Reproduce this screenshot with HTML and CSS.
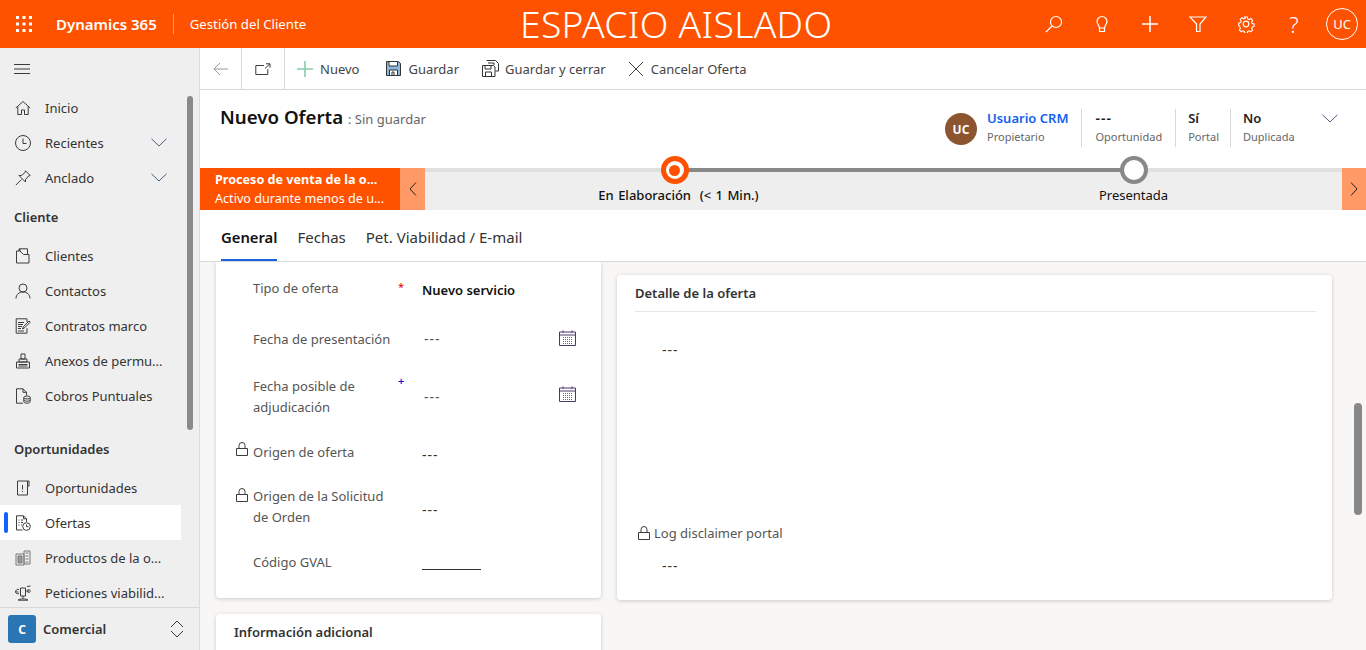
FILE: index.html
```html
<!DOCTYPE html>
<html lang="es">
<head>
	<meta charset="UTF-8" />
	<title>Nuevo Oferta</title>
	<link rel="stylesheet" href="styles.css">
</head>
<body>
<header class="topbar">
	<div class="brand">
		<svg class="waffle" width="16" height="16" viewBox="0 0 16 16" fill="#fff"><rect x="0" y="0" width="3" height="3"/><rect x="6.5" y="0" width="3" height="3"/><rect x="13" y="0" width="3" height="3"/><rect x="0" y="6.5" width="3" height="3"/><rect x="6.5" y="6.5" width="3" height="3"/><rect x="13" y="6.5" width="3" height="3"/><rect x="0" y="13" width="3" height="3"/><rect x="6.5" y="13" width="3" height="3"/><rect x="13" y="13" width="3" height="3"/></svg>
		<span class="product">Dynamics 365</span>
		<span class="app">Gestión del Cliente</span>
	</div>
	<div class="sandbox">ESPACIO AISLADO</div>
	<div class="top-actions">
		<button class="top-btn"><svg width="18" height="18" viewBox="0 0 18 18" class="ic-w"><circle cx="11" cy="7" r="5.5"/><path d="M7 11 1 17"/></svg></button>
		<button class="top-btn"><svg width="18" height="18" viewBox="0 0 18 18" class="ic-w"><path d="M6.5 13c0-2.500-2.500-3.500-2.500-6.500a5 5 0 0 1 10 0c0 3-2.500 4-2.500 6.500zM6.500 13v3.500h5V13"/></svg></button>
		<button class="top-btn"><svg width="18" height="18" viewBox="0 0 18 18" class="ic-w ic-thick"><path d="M9 1v16M1 9h16"/></svg></button>
		<button class="top-btn"><svg width="18" height="18" viewBox="0 0 18 18" class="ic-w"><path d="M1 2h16l-6 7v7.500H7.500V9z"/></svg></button>
		<button class="top-btn"><svg width="18" height="18" viewBox="0 0 18 18" class="ic-w"><circle cx="9" cy="9" r="2.800"/><path d="M7.500 1.200h3l.4 2.200 1.500.7 2-1.200 2 2.100-1.200 1.900.7 1.500 2.100.5v2.800l-2.100.5-.7 1.500 1.200 1.900-2 2.100-2-1.200-1.500.7-.4 2.200h-3l-.4-2.200-1.500-.7-2 1.200-2-2.100 1.200-1.900-.7-1.500L.9 10.800V8l2.100-.5.700-1.500-1.200-1.900 2-2.100 2 1.200 1.500-.7z" transform="translate(.9 .9) scale(.9)"/></svg></button>
		<button class="top-btn help">?</button>
		<button class="top-btn"><span class="me">UC</span></button>
	</div>
</header>

<div class="shell">
	<nav class="sidebar">
		<div class="nav-scroll">
			<div class="burger"><svg width="16" height="12" viewBox="0 0 16 12" class="ic"><path d="M0 1.500h16M0 6h16M0 10.500h16"/></svg></div>
			<div class="nav-item"><svg width="16" height="16" viewBox="0 0 16 16" class="ic"><path d="M.8 8 8 1.500 15.200 8M2.800 6.500v8h3.700v-4.500h3v4.500h3.700v-8"/></svg><span>Inicio</span></div>
			<div class="nav-item"><svg width="16" height="16" viewBox="0 0 16 16" class="ic"><circle cx="8" cy="8" r="7.500"/><path d="M8 3.500V8.500h3.500"/></svg><span>Recientes</span><svg class="chev" width="16" height="9" viewBox="0 0 16 9"><path d="M.5.800 8 8 15.500.800"/></svg></div>
			<div class="nav-item"><svg width="16" height="16" viewBox="0 0 16 16" class="ic"><path d="M10.500.800 15.200 5.500 13.500 6 10.500 9.500 10.500 12 4 5.500 6.500 5.500 10 2.500zM6.500 9.500.8 15.200"/></svg><span>Anclado</span><svg class="chev" width="16" height="9" viewBox="0 0 16 9"><path d="M.5.800 8 8 15.500.800"/></svg></div>

			<div class="nav-group">Cliente</div>
			<div class="nav-item"><svg width="16" height="16" viewBox="0 0 16 16" class="ic"><path d="M1.500 6V15h12.500V6.500H8.500L5 3H1.500zM4 3V.800h8.500v5.700M5 3V1"/></svg><span>Clientes</span></div>
			<div class="nav-item"><svg width="16" height="16" viewBox="0 0 16 16" class="ic"><circle cx="8" cy="5" r="4"/><path d="M1 15.500c0-4 3-6.500 7-6.500s7 2.500 7 6.500"/></svg><span>Contactos</span></div>
			<div class="nav-item"><svg width="16" height="16" viewBox="0 0 16 16" class="ic"><path d="M12 4V.800H1.200v14.400H12v-5M3 4.500h6M3 6.500h5M3 8.500h4M3 10.500h3M3 13h6M7.500 11l1-2.500L14 3l1.200 1.200-5.500 5.500z"/></svg><span>Contratos marco</span></div>
			<div class="nav-item"><svg width="16" height="16" viewBox="0 0 16 16" class="ic"><path d="M6 1h4v5H6zM4 6h8v3H4zM1.500 9h13v6h-13zM3.500 11.500h9M3.500 13h9"/></svg><span>Anexos de permu...</span></div>
			<div class="nav-item"><svg width="16" height="16" viewBox="0 0 16 16" class="ic"><path d="M8 15.200H1.500V.800H8l3.500 3.500v3M8 .800v3.500h3.500"/><ellipse cx="12" cy="9.500" rx="3.200" ry="1.500"/><path d="M8.800 9.500v4.200c0 .8 1.500 1.500 3.200 1.500s3.200-.7 3.200-1.500V9.500M8.800 11.700c0 .8 1.500 1.500 3.200 1.500s3.200-.7 3.200-1.500"/></svg><span>Cobros Puntuales</span></div>

			<div class="nav-group nav-group-2">Oportunidades</div>
			<div class="nav-item"><svg width="16" height="16" viewBox="0 0 16 16" class="ic"><path d="M2.500 1h10v14h-10zM12.500 1h1.500v5h-1.500M7.500 5v4.500M7.500 11v1"/></svg><span>Oportunidades</span></div>
			<div class="nav-item selected"><svg width="16" height="16" viewBox="0 0 16 16" class="ic"><path d="M7.500 15H1.500V.800h7l3 3v3M8.500.800v3h3M3.500 5h1M6 5h2M3.500 7.500h1M6 7.500h2M3.500 10h1M6 10h1"/><circle cx="11.500" cy="11.500" r="3.800"/><path d="M11.500 9.500v2.200h2"/></svg><span>Ofertas</span></div>
			<div class="nav-item"><svg width="16" height="16" viewBox="0 0 16 16" class="ic ic-grey"><path d="M1 4h8v11H1zM9 1h6v13H9z"/><path d="M3 6h4v7H3z" fill="#999"/><path d="M10.500 3h3M10.500 6h3M10.500 9h3M10.500 12h3"/></svg><span>Productos de la o...</span></div>
			<div class="nav-item"><svg width="16" height="16" viewBox="0 0 16 16" class="ic"><path d="M5.500 3h5v8h-5zM8 11v2.500M3 15.200c1-1.700 9-1.700 10 0zM4 4.500C1.500 3.500.5 6 .5 7S2 9.500 4 8.500M.5 7h3M12 1.500l3.500-.5M15.500 5.500c-1-1.500-3.500-1-3.500.5s2.500 2 3.500.5M11.500 6h3"/></svg><span>Peticiones viabilid...</span></div>
		</div>
		<div class="nav-thumb"></div>
		<div class="area-switch">
			<span class="area-tile">C</span>
			<span class="area-name">Comercial</span>
			<svg width="14" height="18" viewBox="0 0 14 18" class="ic"><path d="M1 7 7 1l6 6M1 11l6 6 6-6"/></svg>
		</div>
	</nav>

	<main class="page">
		<div class="cmdbar">
			<div class="cmd-nav"><svg width="16" height="14" viewBox="0 0 16 14" class="ic ic-light"><path d="M15 7H1M7 1 1 7l6 6"/></svg></div>
			<div class="cmd-nav cmd-nav-2"><svg width="16" height="12" viewBox="0 0 16 12" class="ic"><path d="M9 2.500H.8v9h12V6M11 .8h4v4M15 .8 10 5.500"/></svg></div>
			<div class="cmd cmd-first"><svg width="16" height="16" viewBox="0 0 16 16" class="ic ic-green"><path d="M8 0v16M0 8h16"/></svg><span>Nuevo</span></div>
			<div class="cmd cmd-second"><svg width="15" height="15" viewBox="0 0 15 15" class="ic ic-save"><path class="fill-blue" d="M.5.500h12l2 2v12H.5z"/><path class="fill-white" d="M3 .5h8.500v4.500H3zM3.500 9h8v5.500h-8z"/><path d="M6 11h2v3.500H6z"/></svg><span>Guardar</span></div>
			<div class="cmd cmd-third"><svg width="17" height="17" viewBox="0 0 17 17" class="ic ic-save"><path d="M4.500.5h9l3 3V11h-3"/><path class="fill-white" d="M.5 5.500h11l1.500 1.500v9.500H.5z"/><path d="M3 5.500h6v3.500H3zM3.500 12h6v4.500h-6z"/><path d="M6 3h6v2"/></svg><span>Guardar y cerrar</span></div>
			<div class="cmd cmd-last"><svg width="16" height="16" viewBox="0 0 16 16" class="ic"><path d="M1 1l14 14M15 1 1 15"/></svg><span>Cancelar Oferta</span></div>
		</div>

		<div class="form-head">
			<h1>Nuevo Oferta <small>: Sin guardar</small></h1>
			<div class="head-fields">
				<div class="owner">
					<span class="owner-pic">UC</span>
					<div class="hf"><a class="hf-link">Usuario CRM</a><span class="hf-cap">Propietario</span></div>
				</div>
				<div class="hf hf-line hf-opp"><b class="dash">---</b><span class="hf-cap">Oportunidad</span></div>
				<div class="hf hf-line hf-portal"><b>Sí</b><span class="hf-cap">Portal</span></div>
				<div class="hf hf-line hf-wide"><b>No</b><span class="hf-cap">Duplicada</span></div>
				<svg class="head-chev" width="16" height="9" viewBox="0 0 16 9"><path d="M.5.800 8 8 15.500.800"/></svg>
			</div>
		</div>

		<div class="process">
			<div class="flag">
				<strong>Proceso de venta de la o...</strong>
				<span>Activo durante menos de u...</span>
			</div>
			<div class="flag-nav"><svg width="8" height="14" viewBox="0 0 8 14" class="ic ic-dark"><path d="M7 .5 1 7l6 6.500"/></svg></div>
			<div class="track">
				<div class="track-line"></div>
				<div class="stage">
					<span class="dot dot-active"></span>
					<span class="stage-name stage-name-active">En Elaboración&nbsp; (&lt; 1 Min.)</span>
				</div>
				<div class="stage">
					<span class="dot"></span>
					<span class="stage-name">Presentada</span>
				</div>
			</div>
			<div class="flag-nav flag-nav-r"><svg width="8" height="14" viewBox="0 0 8 14" class="ic ic-dark"><path d="M1 .5 7 7l-6 6.500"/></svg></div>
		</div>

		<div class="tabs">
			<span class="tab active">General</span>
			<span class="tab">Fechas</span>
			<span class="tab">Pet. Viabilidad / E-mail</span>
		</div>

		<div class="content">
			<div class="col-left">
				<section class="card card-fields">
					<div class="field field-first">
						<span class="lock"></span>
						<label class="up">Tipo de oferta</label>
						<span class="req">*</span>
						<span class="val val-strong">Nuevo servicio</span>
					</div>
					<div class="field">
						<span class="lock"></span>
						<label>Fecha de presentación</label>
						<span class="req"></span>
						<span class="val val-pad dash">---</span>
						<svg class="cal" width="17" height="16" viewBox="0 0 17 16"><path d="M.5 2h16v13.500H.5zM.5 5h16M4 .5V3M13 .5V3"/><path class="cal-dots" d="M4 7.500h9M4 9.500h9M4 11.500h9M4 13.500h9"/></svg>
					</div>
					<div class="field">
						<span class="lock"></span>
						<label>Fecha posible de adjudicación</label>
						<span class="req req-blue">+</span>
						<span class="val val-pad val-pad-low dash">---</span>
						<svg class="cal cal-up" width="17" height="16" viewBox="0 0 17 16"><path d="M.5 2h16v13.500H.5zM.5 5h16M4 .5V3M13 .5V3"/><path class="cal-dots" d="M4 7.500h9M4 9.500h9M4 11.500h9M4 13.500h9"/></svg>
					</div>
					<div class="field">
						<span class="lock"><svg width="12" height="14" viewBox="0 0 12 14" class="ic"><path d="M.5 6.500h11v7H.5zM3 6.500V3.500a3 3 0 0 1 6 0v3"/></svg></span>
						<label>Origen de oferta</label>
						<span class="req"></span>
						<span class="val val-low dash">---</span>
					</div>
					<div class="field">
						<span class="lock"><svg width="12" height="14" viewBox="0 0 12 14" class="ic"><path d="M.5 6.500h11v7H.5zM3 6.500V3.500a3 3 0 0 1 6 0v3"/></svg></span>
						<label>Origen de la Solicitud de Orden</label>
						<span class="req"></span>
						<span class="val val-low dash">---</span>
					</div>
					<div class="field">
						<span class="lock"></span>
						<label>Código GVAL</label>
						<span class="req"></span>
						<span class="val val-blank"></span>
					</div>
				</section>
				<section class="card card-more">
					<h2>Información adicional</h2>
				</section>
			</div>
			<section class="card card-detail">
				<h2 class="detail-title">Detalle de la oferta</h2>
				<div class="detail-value detail-top dash">---</div>
				<div class="detail-label">
					<svg width="12" height="14" viewBox="0 0 12 14" class="ic"><path d="M.5 6.500h11v7H.5zM3 6.500V3.500a3 3 0 0 1 6 0v3"/></svg>
					<span>Log disclaimer portal</span>
				</div>
				<div class="detail-value dash">---</div>
			</section>
			<div class="page-thumb"></div>
		</div>
	</main>
</div>
</body>
</html>
```
FILE: styles.css
```css
* {
	box-sizing: border-box;
}
html, body {
	margin: 0;
	height: 100%;
	overflow: hidden;
}
body {
	font-family: "Noto Sans", "Open Sans", sans-serif;
	font-size: 13px;
	color: #333;
	background: #fff;
}
svg {
	flex: none;
	display: block;
}
.dash {
	font-size: 14px;
	letter-spacing: 1px;
}
.ic, .chev, .head-chev, .cal {
	fill: none;
	stroke: #3c3c3c;
	stroke-width: 1;
}
.ic-w {
	fill: none;
	stroke: #fff;
	stroke-width: 1.2;
}
.ic-thick {
	stroke-width: 1.6;
}
.ic-light {
	stroke: #999;
}
.ic-dark {
	stroke: #222;
}
.ic-grey {
	stroke: #777;
}
.ic-green {
	stroke: #88cfa6;
	stroke-width: 1.6;
}
.ic-save {
	stroke: #333;
}
.fill-blue {
	fill: #8fb8de;
}
.fill-white {
	fill: #fff;
}

/* top bar */
.topbar {
	height: 48px;
	background: #ff5200;
	color: #fff;
	display: flex;
	align-items: center;
}
.brand {
	width: 520px;
	display: flex;
	align-items: center;
	flex: none;
}
.waffle {
	margin-left: 16px;
}
.product {
	margin-left: 24px;
	font-size: 15px;
	font-weight: 600;
	padding-right: 16px;
	border-right: 1px solid #ff9966;
	line-height: 20px;
}
.app {
	margin-left: 16px;
	font-size: 13.2px;
}
.sandbox {
	font-size: 37.3px;
	font-weight: 300;
	letter-spacing: .3px;
	white-space: nowrap;
	line-height: 48px;
}
.top-actions {
	margin-left: auto;
	display: flex;
}
.top-btn {
	width: 48px;
	height: 48px;
	padding: 0;
	border: 0;
	background: none;
	color: #fff;
	display: flex;
	align-items: center;
	justify-content: center;
	font-family: inherit;
}
.help {
	font-size: 22px;
	font-weight: 300;
}
.me {
	width: 32px;
	height: 32px;
	border: 1px solid #fff;
	border-radius: 50%;
	font-size: 13px;
	display: flex;
	align-items: center;
	justify-content: center;
}

.shell {
	height: 602px;
	display: flex;
}

/* left nav */
.sidebar {
	width: 200px;
	flex: none;
	background: #efefef;
	border-right: 1px solid #dcdcdc;
	position: relative;
	display: flex;
	flex-direction: column;
}
.nav-scroll {
	height: 559px;
	overflow: hidden;
}
.burger {
	height: 42px;
	padding-left: 14px;
	display: flex;
	align-items: center;
}
.nav-item {
	height: 35px;
	width: 181px;
	padding-left: 15px;
	display: flex;
	align-items: center;
	gap: 14px;
	position: relative;
	white-space: nowrap;
}
.nav-item span {
	flex: 1;
}
.chev {
	stroke: #47637f;
	margin-right: 14px;
}
.nav-group {
	height: 43px;
	padding: 13px 0 0 14px;
	font-weight: 600;
}
.nav-group-2 {
	height: 57px;
	padding-top: 27px;
}
.selected {
	background: #fff;
}
.selected::before {
	content: "";
	position: absolute;
	left: 4px;
	top: 7px;
	width: 4px;
	height: 21px;
	border-radius: 2px;
	background: #0f62fe;
}
.nav-thumb {
	position: absolute;
	left: 187px;
	top: 48px;
	width: 6px;
	height: 334px;
	border-radius: 3px;
	background: #8a8a8a;
}
.area-switch {
	flex: 1;
	border-top: 1px solid #d8d8d8;
	padding: 0 15px 0 8px;
	display: flex;
	align-items: center;
}
.area-tile {
	width: 28px;
	height: 28px;
	border-radius: 3px;
	background: #2a75b3;
	color: #fff;
	font-weight: 700;
	font-size: 12px;
	display: flex;
	align-items: center;
	justify-content: center;
}
.area-name {
	flex: 1;
	margin-left: 7px;
	font-weight: 600;
}

/* right side */
.page {
	flex: 1;
	min-width: 0;
	display: flex;
	flex-direction: column;
}
.cmdbar {
	height: 42px;
	flex: none;
	border-bottom: 1px solid #d8d8d8;
	display: flex;
	align-items: center;
}
.cmd-nav {
	width: 42px;
	height: 41px;
	border-right: 1px solid #d8d8d8;
	display: flex;
	align-items: center;
	padding-left: 13px;
}
.cmd-nav-2 {
	width: 43px;
	padding-left: 13px;
}
.cmd {
	display: flex;
	align-items: center;
	gap: 7px;
	margin-left: 23px;
	color: #444;
}
.cmd-first {
	margin-left: 12px;
}
.cmd-second {
	margin-left: 27px;
}
.cmd-third {
	gap: 6px;
}
.cmd-last {
	margin-left: 22px;
}

.form-head {
	height: 78px;
	flex: none;
	padding: 14px 0 0 20px;
	display: flex;
	justify-content: space-between;
}
h1 {
	margin: 0;
	font-size: 18.7px;
	font-weight: 600;
	color: #111;
	line-height: 26px;
}
h1 small {
	font-size: 13px;
	font-weight: 400;
	color: #666;
}
.head-fields {
	display: flex;
	align-items: flex-start;
	padding-top: 5px;
	height: 44px;
}
.owner {
	display: flex;
	align-items: flex-start;
	gap: 10px;
	padding-right: 13px;
}
.owner-pic {
	width: 32px;
	height: 32px;
	margin-top: 4px;
	border-radius: 50%;
	background: #8c5530;
	color: #fff;
	font-size: 12px;
	font-weight: 700;
	display: flex;
	align-items: center;
	justify-content: center;
}
.hf {
	display: flex;
	flex-direction: column;
	gap: 1px;
	line-height: 18px;
	height: 38px;
}
.hf-line {
	border-left: 1px solid #d8d8d8;
	padding: 0 12px 0 13px;
}
.hf-opp {
	padding-right: 13px;
}
.hf-portal {
	padding: 0 11px 0 12px;
}
.hf-wide {
	width: 92px;
	padding-left: 12px;
}
.hf b {
	font-weight: 600;
	color: #222;
}
.hf-link {
	color: #1160f0;
	font-weight: 600;
}
.hf-cap {
	font-size: 11px;
	letter-spacing: 0;
	color: #666;
}
.head-chev {
	stroke: #47637f;
	margin: 5px 28px 0 0;
}

/* process bar */
.process {
	height: 42px;
	flex: none;
	display: flex;
}
.flag {
	width: 200px;
	background: #ff5200;
	color: #fff;
	padding: 2px 0 0 15px;
	display: flex;
	flex-direction: column;
	line-height: 19px;
	font-size: 12.6px;
	white-space: nowrap;
}
.flag strong {
	font-weight: 700;
}
.flag-nav {
	width: 25px;
	background: #ff9966;
	display: flex;
	align-items: center;
	justify-content: center;
}
.flag-nav-r {
	width: 24px;
}
.track {
	flex: 1;
	min-width: 0;
	background: #eee;
	border-top: 4px solid #e0e0e0;
	position: relative;
	display: grid;
	grid-template-columns: 459px 459px;
	padding-left: 20px;
}
.track-line {
	position: absolute;
	left: 250px;
	top: -4px;
	width: 459px;
	height: 4px;
	background: #888;
}
.stage {
	display: flex;
	flex-direction: column;
	align-items: center;
	position: relative;
	margin-top: -16px;
}
.dot {
	width: 28px;
	height: 28px;
	border-radius: 50%;
	border: 4px solid #888;
	background: #fff;
}
.dot-active {
	border: 5px solid #ff5200;
	display: flex;
	align-items: center;
	justify-content: center;
}
.dot-active::after {
	content: "";
	width: 11px;
	height: 11px;
	border-radius: 50%;
	background: #ff5200;
}
.stage-name {
	margin-top: 2px;
	font-size: 13px;
	color: #111;
	white-space: nowrap;
}
.stage-name-active {
	font-weight: 500;
	word-spacing: 1px;
	margin-left: 8px;
}

/* tabs */
.tabs {
	height: 52px;
	flex: none;
	border-bottom: 1px solid #d8d8d8;
	padding-left: 21px;
	display: flex;
	gap: 20px;
}
.tab {
	font-size: 15px;
	height: 51px;
	line-height: 54px;
	color: #333;
}
.tab.active {
	font-size: 14.8px;
	font-weight: 600;
	color: #111;
	border-bottom: 2px solid #1d62e0;
}

.content {
	flex: 1;
	min-height: 0;
	background: #f8f7f6;
	padding: 0 0 0 16px;
	display: flex;
	gap: 16px;
	align-items: flex-start;
	overflow: hidden;
	position: relative;
}
.col-left {
	width: 385px;
	flex: none;
}
.card {
	background: #fff;
	border-radius: 4px;
	box-shadow: 0 1px 4px rgba(0, 0, 0, .18);
}
.card-fields {
	height: 336px;
	border-radius: 0 0 4px 4px;
	display: grid;
	grid-template-rows: 52px 50px 65px 46px 64px 46px;
	align-content: start;
}
.field {
	display: grid;
	grid-template-columns: 37px 145px 24px 1fr auto;
	align-items: center;
	padding-right: 25px;
}
.field-first {
	padding-top: 4px;
}
.field label {
	color: #555;
	line-height: 21px;
}
.up {
	margin-bottom: 4px;
}
.lock {
	padding-left: 20px;
	align-self: start;
	margin-top: 13px;
}
.req {
	align-self: start;
	font-size: 11px;
	color: #e00000;
	line-height: 14px;
	margin-top: 14px;
}
.req-blue {
	color: #2200dd;
	font-weight: 600;
	margin-top: 10px;
	margin-left: 0;
}
.val {
	color: #333;
}
.val-strong {
	font-weight: 600;
	color: #111;
}
.val-pad {
	padding-left: 2px;
	color: #555;
	margin-bottom: 2px;
}
.val-pad-low {
	margin-bottom: 0;
}
.val-low {
	margin-top: 4px;
}
.val-blank {
	width: 59px;
	height: 12px;
	border-bottom: 1px solid #333;
	margin-top: 4px;
}
.cal {
	stroke: #4a3a6a;
	margin-bottom: 2px;
}
.cal-up {
	margin-bottom: 5px;
}
.cal-dots {
	stroke: #7d5fa0;
	stroke-dasharray: 1 1;
}
.card-more {
	margin-top: 16px;
	height: 60px;
	padding: 9px 18px;
}
h2 {
	margin: 0;
	font-size: 13px;
	font-weight: 600;
	color: #333;
	line-height: 18px;
}
.card-detail {
	width: 715px;
	height: 325px;
	margin-top: 13px;
	padding: 9px 16px 0 18px;
	flex: none;
}
.detail-title {
	height: 28px;
	padding-bottom: 9px;
	border-bottom: 1px solid #e6e6e6;
}
.detail-value {
	padding-left: 27px;
	line-height: 20px;
	color: #333;
}
.detail-top {
	margin-top: 28px;
	height: 184px;
}
.detail-label {
	display: flex;
	align-items: center;
	gap: 4px;
	margin: 0 0 14px 3px;
	color: #555;
}
.page-thumb {
	position: absolute;
	left: 1154px;
	top: 141px;
	width: 8px;
	height: 112px;
	border-radius: 4px;
	background: #888;
}
```
